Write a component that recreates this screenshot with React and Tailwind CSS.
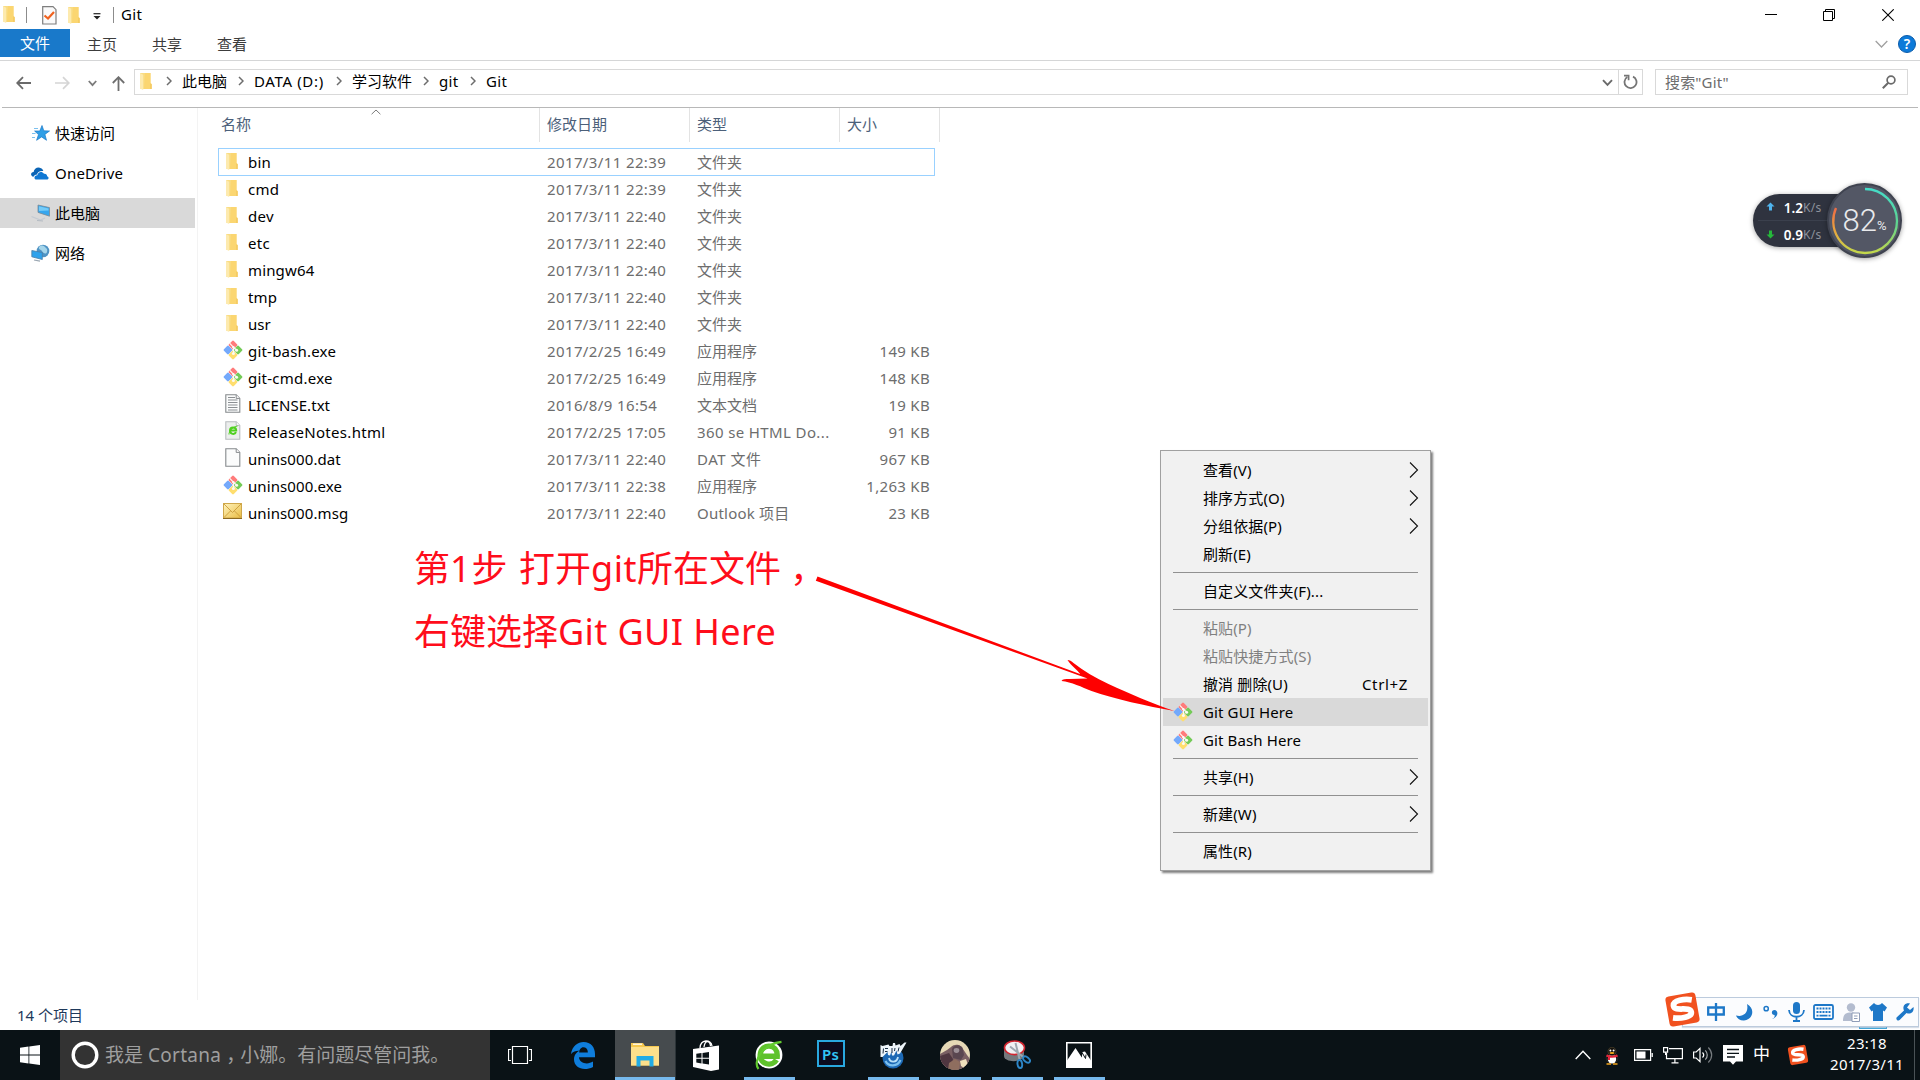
import React from "react";

const FILES = [
  ["folder", "bin", "2017/3/11 22:39", "文件夹", "", "tracking-[0.2px]"],
  ["folder", "cmd", "2017/3/11 22:39", "文件夹", "", "tracking-[0.2px]"],
  ["folder", "dev", "2017/3/11 22:40", "文件夹", "", "tracking-[0.3px]"],
  ["folder", "etc", "2017/3/11 22:40", "文件夹", "", "tracking-[0.3px]"],
  ["folder", "mingw64", "2017/3/11 22:40", "文件夹", "", "tracking-[0.15px]"],
  ["folder", "tmp", "2017/3/11 22:40", "文件夹", "", "tracking-[0.2px]"],
  ["folder", "usr", "2017/3/11 22:40", "文件夹", "", "tracking-[0px]"],
  ["git", "git-bash.exe", "2017/2/25 16:49", "应用程序", "149 KB", "tracking-[0.2px]"],
  ["git", "git-cmd.exe", "2017/2/25 16:49", "应用程序", "148 KB", "tracking-[0.25px]"],
  ["txt", "LICENSE.txt", "2016/8/9 16:54", "文本文档", "19 KB", "tracking-[0.05px]"],
  ["html", "ReleaseNotes.html", "2017/2/25 17:05", "360 se HTML Do...", "91 KB", "tracking-[0.3px]"],
  ["dat", "unins000.dat", "2017/3/11 22:40", "DAT 文件", "967 KB", "tracking-[0.1px]"],
  ["git", "unins000.exe", "2017/3/11 22:38", "应用程序", "1,263 KB", "tracking-[0.1px]"],
  ["msg", "unins000.msg", "2017/3/11 22:40", "Outlook 项目", "23 KB", "tracking-[0.1px]"],
];

const KIND_TRACKING = {
  "360 se HTML Do...": "tracking-[0.38px]",
  "DAT 文件": "tracking-[0.5px]",
  "Outlook 项目": "tracking-[0.22px]",
};

const MENU = [
  { label: "查看(V)", sub: true },
  { label: "排序方式(O)", sub: true },
  { label: "分组依据(P)", sub: true },
  { label: "刷新(E)" },
  null,
  { label: "自定义文件夹(F)..." },
  null,
  { label: "粘贴(P)", off: true },
  { label: "粘贴快捷方式(S)", off: true },
  { label: "撤消 删除(U)", key: "Ctrl+Z" },
  { label: "Git GUI Here", git: true, hot: true },
  { label: "Git Bash Here", git: true },
  null,
  { label: "共享(H)", sub: true },
  null,
  { label: "新建(W)", sub: true },
  null,
  { label: "属性(R)" },
];

function Folder() {
  return (
    <svg className="block shrink-0" width="12" height="17" viewBox="0 0 12 17">
      <path d="M0 0h10.5v10l1 1v5H2L0 15.5z" fill="#f9dc83" />
      <path d="M5 0h5.5v10l1 1v5H4z" fill="#fbd671" />
      <path d="M0 0l3.2 1.8V17L0 15.5z" fill="#fdeaae" />
      <path d="M10.5 10.5l1 .8V16h-1z" fill="#efc257" />
    </svg>
  );
}

function GitIcon() {
  return (
    <svg className="block shrink-0" width="20" height="20" viewBox="0 0 20 20">
      <g transform="rotate(45 10 10)">
        <rect x="3" y="3" width="6.9" height="6.9" rx="1.2" fill="#ff7b7b" />
        <rect x="10.1" y="3" width="6.9" height="6.9" rx="1.2" fill="#74cb58" />
        <rect x="3" y="10.1" width="6.9" height="6.9" rx="1.2" fill="#74a9fb" />
        <rect x="10.1" y="10.1" width="6.9" height="6.9" rx="1.2" fill="#ffde6e" />
      </g>
      <path d="M6.8 3.4l3.8 4v6M10.6 7.4l3 2.600" stroke="#fbfaf4" strokeWidth="1.2" fill="none" />
      <circle cx="10.4" cy="7.200" r="1.2" fill="#fbfaf4" />
      <circle cx="13.6" cy="10.200" r="1.5" fill="#fbfaf4" />
      <circle cx="10.4" cy="13.400" r="1.5" fill="#fbfaf4" />
    </svg>
  );
}

function Page({ kind }) {
  return (
    <svg className="block shrink-0" width="16" height="19" viewBox="0 0 16 19">
      <path d="M.8.8h10.4l3.6 3.6v13.8H.8z" fill={kind === "html" ? "#eceeed" : "#fbfcfc"} stroke={kind === "html" ? "#b9bdc0" : "#85898c"} strokeWidth="1.1" />
      <path d="M11.2.8v3.6h3.6" fill="#fff" stroke={kind === "html" ? "#b9bdc0" : "#85898c"} strokeWidth="1" />
      {kind === "txt" && <path d="M3 3.5h7M3 6h9.5M3 8.5h9.5M3 11h9.5M3 13.5h9.5M3 16h9.5" stroke="#8b8f93" strokeWidth="1" />}
      {kind === "html" && (
        <g fill="none" stroke="#4fd01f">
          <path d="M5 9.6h6.2C11.200 5.400 5 5.400 5 9.600c0 4 4.800 4.200 6 1.600" strokeWidth="2" />
          <path d="M4 13.500C3.500 11 8 5.500 12.500 5" strokeWidth="1" />
        </g>
      )}
    </svg>
  );
}

function Mail() {
  return (
    <svg className="block shrink-0" width="19" height="16" viewBox="0 0 19 16">
      <defs>
        <linearGradient id="mailFill" x1="0" y1="0" x2="1" y2="1">
          <stop offset="0" stopColor="#fff3bd" />
          <stop offset="1" stopColor="#e9bd44" />
        </linearGradient>
      </defs>
      <rect x=".5" y=".5" width="18" height="14.500" fill="url(#mailFill)" stroke="#cfa74a" />
      <path d="M1 14.500l6.500-6.500M18 14.500L11.500 8M1 1l8.500 8.500L18 1" stroke="#c99b3a" fill="none" strokeWidth=".9" />
      <path d="M0 15.500h19" stroke="#8d6b22" strokeWidth="1" />
    </svg>
  );
}

function FileIcon({ type }) {
  if (type === "folder") return <span className="ml-[7px] -mt-[1px]"><Folder /></span>;
  if (type === "git") return <span className="ml-[4px] -mt-[2px]"><GitIcon /></span>;
  if (type === "msg") return <span className="ml-[4px] -mt-[3px]"><Mail /></span>;
  return <span className="ml-[6px] -mt-[3px]"><Page kind={type} /></span>;
}

function Crumb({ children, className }) {
  return (
    <span className={"-mt-[2px] flex items-center " + className}>
      <svg width="6" height="10" viewBox="0 0 6 10" className="mr-[10px] shrink-0"><path d="M1 1l4 4-4 4" stroke="#6d6d6d" strokeWidth="1.500" fill="none" /></svg>
      <span className="whitespace-nowrap">{children}</span>
    </span>
  );
}

function Star() {
  return (
    <svg width="18" height="17" viewBox="0 0 18 17">
      <path d="M10 0.500l1.800 5.300 5.700.2-4.600 3.400 1.600 5.900-4.900-3.400-5 3.400 1.900-5.700L2.600 6h5.200z" fill="#2f9ee6" stroke="#1b79c8" strokeWidth=".7" />
      <path d="M2 3.500h4M0 8.500h3.500M0 12.500h3" stroke="#7cc0ee" strokeWidth="1.100" />
    </svg>
  );
}

function Cloud() {
  return (
    <svg width="18" height="13" viewBox="0 0 18 13">
      <path d="M2.500 9.800C-1 9-.5 5 2.600 4.900 3 1.500 7-.8 10 1.300c1.500.8 2 1.700 2.300 2.700C8.500 3.500 6.300 5.500 6 7.500 4 7.600 3 8.500 2.500 9.800z" fill="#0a64b5" />
      <path d="M5.500 12.500c-3-.3-2.600-4 .8-4.200C6.800 5 10.800 3.600 13 6.800c2.200-.3 3.200 1.200 3 2.400 2.200.5 2.100 3.200-.2 3.300z" fill="#0f78d4" />
    </svg>
  );
}

function Pc() {
  return (
    <svg width="20" height="18" viewBox="0 0 20 18">
      <path d="M7 1l11.500 2.600v8.600L7 8.400z" fill="#36a6ee" stroke="#7b8a96" strokeWidth=".8" />
      <path d="M8 2.200l9.500 2.300v2L8 7z" fill="#74cbf8" />
      <path d="M.5 12.500l9 3.500 4.500-2" stroke="#c3cad2" strokeWidth="1.300" fill="none" />
      <path d="M6 16.500l6 .5" stroke="#b4bbc3" />
    </svg>
  );
}

function Net() {
  return (
    <svg width="19" height="18" viewBox="0 0 19 18">
      <circle cx="12" cy="7" r="6.300" fill="#4f93c4" />
      <path d="M8 3c3-3 5-1 6 0s3 2 2 5-4 1-5-1-4-1-3-4z" fill="#a5d5ea" />
      <path d="M.8 6.500l10.500 2v7L.8 12.800z" fill="#2fa2ec" stroke="#4e7ea5" strokeWidth=".8" />
      <path d="M3 16l6 1.200" stroke="#9aa6b2" strokeWidth="1.200" />
    </svg>
  );
}

function SogouS({ size }) {
  return (
    <svg width={size} height={size} viewBox="0 0 36 36">
      <g transform="rotate(-10 18 18)">
        <rect x="3.200" y="3.200" width="29.600" height="29.600" rx="3.500" fill="#f1511f" />
        <path d="M28.500 10.300C22 8 10 7.400 10 13.200c0 6 16 2.600 16 8.600 0 5.200-11.500 4.800-18.500 2.600" stroke="#fff" strokeWidth="5.600" fill="none" />
      </g>
    </svg>
  );
}

function TaskButton({ children, className, running }) {
  return (
    <div className={"flex h-[50px] flex-col items-center justify-between " + className}>
      <span className="h-[3px]" />
      <span className="flex h-[44px] items-center justify-center">{children}</span>
      <span className={running ? "h-[3px] w-full bg-[#76b9ed]" : "h-[3px] w-full"} />
    </div>
  );
}

function Speed({ up, value }) {
  return (
    <div className="flex h-[26px] items-center">
      <svg width="9" height="10" viewBox="0 0 9 10" className={up ? "" : "rotate-180"}>
        <path d="M4.500.5L8.500 4.500H6V8.500H3V4.500H.5z" fill={up ? "#4fb4ee" : "#25b83a"} />
      </svg>
      <span className={(up ? "mt-[2px]" : "mt-[1px]") + " ml-[6px] w-[22px] text-right text-[13.500px] font-semibold tracking-[0px] text-white"}>{value}</span>
      <span className={(up ? "mt-[2px]" : "mt-[1px]") + " text-[12px] tracking-[0.3px] text-[#8d919b]"}>K/s</span>
    </div>
  );
}

export default function App() {
  return (
    <div className="relative flex h-[1080px] w-[1920px] flex-col overflow-hidden bg-white font-['Noto_Sans','Noto_Sans_CJK_SC',sans-serif] text-[15px] leading-[20px] text-black">
      {/* title bar */}
      <header className="flex h-[29px] shrink-0 items-center">
        <span className="ml-[3px]"><Folder /></span>
        <span className="ml-[11px] h-[16px] w-px bg-[#8c8c8c]" />
        <svg className="ml-[15px] mt-[1px]" width="15" height="19" viewBox="0 0 15 19">
          <path d="M.7.7h10.300l3 3v14.300H.7z" fill="#fafafa" stroke="#7e7e7e" strokeWidth="1.200" />
          <path d="M2.500 9.500l3.500 3 6-6.500" stroke="#f0621f" strokeWidth="2.200" fill="none" />
        </svg>
        <span className="ml-[11px] mt-[1px]"><Folder /></span>
        <svg className="ml-[13px] mt-[3px]" width="8" height="7" viewBox="0 0 8 7"><path d="M.5.7h7" stroke="#222" strokeWidth="1.200" /><path d="M.5 3h7L4 6.500z" fill="#222" /></svg>
        <span className="ml-[12px] h-[16px] w-px bg-[#8c8c8c]" />
        <span className="ml-[7px] -mt-[1px] tracking-[0.3px]">Git</span>
        <div className="ml-auto mr-[26px] flex items-center">
          <svg width="12" height="12" viewBox="0 0 12 12"><path d="M0 5.500h12" stroke="#000" /></svg>
          <svg className="ml-[46px]" width="12" height="12" viewBox="0 0 12 12"><path d="M.5 2.500h9v9h-9zM2.500 2.500v-2h9v9h-2" stroke="#000" fill="none" /></svg>
          <svg className="ml-[47px]" width="12" height="12" viewBox="0 0 12 12"><path d="M.3.3l11.400 11.400M11.700.3L.3 11.700" stroke="#000" strokeWidth="1.100" /></svg>
        </div>
      </header>

      {/* ribbon tabs */}
      <nav className="flex h-[32px] shrink-0 items-start border-b border-[#d5d6d7] text-[#3c3c3c]">
        <span className="flex h-[28px] w-[70px] items-center justify-center bg-[#1979ca] text-white">文件</span>
        <span className="ml-[17px] mt-[5px]">主页</span>
        <span className="ml-[35px] mt-[5px]">共享</span>
        <span className="ml-[35px] mt-[5px]">查看</span>
        <svg className="ml-auto mt-[11px]" width="13" height="8" viewBox="0 0 13 8"><path d="M.7 1l5.800 6L12.300 1" stroke="#a0a0a0" strokeWidth="1.300" fill="none" /></svg>
        <span className="ml-[10px] mr-[4px] mt-[6px] flex h-[18px] w-[18px] items-center justify-center rounded-full border border-[#0b5cab] bg-[#0d7ad9] text-[14px] font-semibold text-white">?</span>
      </nav>

      {/* address bar */}
      <div className="flex h-[46px] shrink-0 items-start">
        <svg className="ml-[16px] mt-[15px]" width="15" height="14" viewBox="0 0 15 14"><path d="M15 7H1.500M7 1.200L1.200 7 7 12.800" stroke="#6a6a6a" strokeWidth="1.800" fill="none" /></svg>
        <svg className="ml-[24px] mt-[15px]" width="15" height="14" viewBox="0 0 15 14"><path d="M0 7h13.500M8 1.200L13.800 7 8 12.800" stroke="#d5d5d5" strokeWidth="1.700" fill="none" /></svg>
        <svg className="ml-[18px] mt-[19px]" width="9" height="7" viewBox="0 0 9 7"><path d="M.8 1l3.700 4.200L8.200 1" stroke="#7b7b7b" strokeWidth="1.800" fill="none" /></svg>
        <svg className="ml-[15px] mt-[15px]" width="13" height="15" viewBox="0 0 13 15"><path d="M6.500 15V1.500M.8 7L6.500 1.200 12.200 7" stroke="#6f6f6f" strokeWidth="1.800" fill="none" /></svg>
        <div className="ml-[9px] mt-[8px] flex h-[26px] w-[1509px] items-center border border-[#d9d9d9]">
          <span className="ml-[5px] -mt-[2px]"><Folder /></span>
          <Crumb className="ml-[14px] w-[72px]">此电脑</Crumb>
          <Crumb className="w-[98px] tracking-[0.65px]">DATA (D:)</Crumb>
          <Crumb className="w-[87px]">学习软件</Crumb>
          <Crumb className="w-[47px] tracking-[0.3px]">git</Crumb>
          <Crumb className="tracking-[0.3px]">Git</Crumb>
          <svg className="ml-auto mt-[2px]" width="11" height="8" viewBox="0 0 11 8"><path d="M1 1.200l4.500 4.600L10 1.200" stroke="#6a6a6a" strokeWidth="1.900" fill="none" /></svg>
          <span className="ml-[5px] h-full w-px bg-[#d9d9d9]" />
          <svg className="mx-[4px]" width="15" height="16" viewBox="0 0 15 16"><path d="M4.300 3A6 6 0 1 0 10 2.600" stroke="#757575" strokeWidth="1.800" fill="none" /><path d="M1 1.600h4.600v4.600" stroke="#757575" strokeWidth="1.700" fill="none" /></svg>
        </div>
        <div className="ml-[12px] mt-[8px] flex h-[26px] w-[253px] items-center border border-[#d9d9d9]">
          <span className="ml-[9px] text-[#6d6d6d] tracking-[0.150px]">搜索"Git"</span>
          <svg className="ml-auto mr-[11px]" width="14" height="14" viewBox="0 0 14 14"><circle cx="9" cy="5" r="3.900" stroke="#6a6a6a" strokeWidth="1.700" fill="none" /><path d="M6.300 7.700L.8 13.200" stroke="#6a6a6a" strokeWidth="2" /></svg>
        </div>
      </div>
      <div className="mx-[2px] h-px shrink-0 bg-[#b8b8b8]" />

      {/* window body */}
      <div className="flex min-h-0 flex-1">
        <aside className="flex w-[198px] shrink-0 flex-col border-r border-[#f3f3f3] pt-[10px]">
          <div className="flex h-[30px] w-[195px] items-center"><span className="ml-[32px] w-[23px]"><Star /></span>快速访问</div>
          <div className="mt-[10px] flex h-[30px] w-[195px] items-center"><span className="ml-[31px] w-[24px]"><Cloud /></span><span className="tracking-[0.200px]">OneDrive</span></div>
          <div className="mt-[10px] flex h-[30px] w-[195px] items-center bg-[#d9d9d9]"><span className="ml-[31px] w-[24px]"><Pc /></span>此电脑</div>
          <div className="mt-[10px] flex h-[30px] w-[195px] items-center"><span className="ml-[31px] w-[24px]"><Net /></span>网络</div>
        </aside>
        <main className="flex flex-col">
          <div className="flex h-[34px] text-[#4c607a]">
            <div className="flex w-[342px] items-start border-r border-[#e3e3e3] pl-[23px] pt-[6px]">
              名称
              <svg className="-mt-[5px] ml-[120px]" width="10" height="6" viewBox="0 0 10 6"><path d="M.6 5.200L5 1l4.400 4.200" stroke="#7b7b7b" fill="none" /></svg>
            </div>
            <div className="w-[150px] border-r border-[#e3e3e3] pl-[7px] pt-[6px]">修改日期</div>
            <div className="w-[150px] border-r border-[#e3e3e3] pl-[7px] pt-[6px]">类型</div>
            <div className="w-[100px] border-r border-[#e3e3e3] pl-[7px] pt-[6px]">大小</div>
          </div>
          <div className="mt-[6px] flex flex-col pl-[20px]">
            {FILES.map(([type, name, date, kind, size, spacing], i) => (
              <div key={name} className={i === 0 ? "-mb-px flex h-[28px] w-[717px] items-center border border-[#99d1ff] text-[#6d6d6d]" : "flex h-[27px] w-[717px] items-center border-x border-transparent text-[#6d6d6d]"}>
                <span className="flex w-[29px] items-center"><FileIcon type={type} /></span>
                <span className={"w-[299px] text-black " + spacing}>{name}</span>
                <span className="w-[150px] tracking-[0.380px]">{date}</span>
                <span className={"w-[140px] whitespace-nowrap " + (KIND_TRACKING[kind] || "")}>{kind}</span>
                <span className="w-[93px] text-right tracking-[0.300px]">{size}</span>
              </div>
            ))}
          </div>
        </main>
      </div>

      {/* status bar */}
      <div className="flex h-[30px] shrink-0 items-center">
        <span className="ml-[17px] text-[#1e395b]">14 个项目</span>
      </div>

      {/* taskbar */}
      <footer className="flex h-[50px] shrink-0 bg-[#0a1216] text-white">
        <div className="flex w-[60px] items-center justify-center">
          <svg width="20" height="20" viewBox="0 0 20 20" fill="#fff"><path d="M0 2.800l8.500-1.200v8H0zM9.300 1.500L20 0v9.600H9.300zM0 10.400h8.500v8L0 17.200zM9.300 10.400H20V20L9.300 18.500z" /></svg>
        </div>
        <div className="flex w-[430px] items-center bg-[#333333]">
          <svg className="ml-[11px]" width="28" height="28" viewBox="0 0 28 28"><circle cx="14" cy="14" r="11.800" stroke="#fff" strokeWidth="3.400" fill="none" /></svg>
          <span className="ml-[6px] whitespace-nowrap text-[19px] text-[#9f9f9f]">我是 <span className="tracking-[0.3px]">Cortana</span><span className="relative left-[5px]">，</span>小娜。有问题尽管问我。</span>
        </div>
        <div className="flex w-[60px] items-center justify-center">
          <svg width="24" height="18" viewBox="0 0 24 18"><path d="M4.500.5h15v17h-15zM3 3.500H.5v11H3M21 3.500h2.500v11H21" stroke="#fff" strokeWidth="1.200" fill="none" /></svg>
        </div>
        <TaskButton className="w-[65px]">
          <svg className="mt-[1px]" width="26" height="27" viewBox="0 0 26 27"><path d="M1 12C2 4 8 0 13.500 0 21 0 25 5.500 25 12v3.300H9c.3 6 8.500 7.800 14 4.300v5.300C14 29.500 4 26 4 17.500c0-4.500 2.600-7.300 5.600-8.700C7 8.500 3 9.300 1 12zm8.200-1.500h8.600c.2-3.600-1.800-5.300-4.500-5.300-2.300 0-4 2.300-4.100 5.300z" fill="#0f7ddb" /></svg>
        </TaskButton>
        <TaskButton className="w-[61px] border-r border-[#2c3438] bg-[#464b4e]" running>
          <svg width="28" height="24" viewBox="0 0 28 24">
            <path d="M0 0h12l2 3h14v19.500H0z" fill="#f5c84f" />
            <path d="M0 4h28v18.500H0z" fill="#fde08b" />
            <path d="M2 1.200h9" stroke="#fff" strokeWidth="1.200" />
            <path d="M5.500 23.500V13h17v10.500h-4v-6h-9v6z" fill="#21ace6" />
          </svg>
        </TaskButton>
        <TaskButton className="ml-[5px] w-[51px]">
          <svg width="27" height="31" viewBox="0 0 27 31">
            <path d="M7 8c.5-9 11-9 12-2M11 7C12 0 17 0 17.500 6" stroke="#fff" strokeWidth="1.300" fill="none" />
            <path d="M0 9l26-3.500v24L18 31 0 27z" fill="#fff" />
            <path d="M3.300 13.800l5.200-.8v4.700H3.300zM9.500 12.900l6.500-1v5.800H9.500zM3.300 18.700h5.200v4.700l-5.200-.8zM9.500 18.700H16v5.800l-6.500-1z" fill="#0a1216" />
          </svg>
        </TaskButton>
        <TaskButton className="ml-[12px] w-[51px]" running>
          <svg className="mr-[3px]" width="30" height="32" viewBox="0 0 30 32">
            <circle cx="16" cy="16" r="13.400" fill="#fff" />
            <path d="M8 17.200h16.200C25 4.500 8.200 3.500 7.200 16c-.4 9.500 12 12.200 16.300 4.800" stroke="#5fc22c" strokeWidth="5.400" fill="none" />
            <path d="M5.500 30C-.5 23 9 5 28.500 2.800" stroke="#62cb30" strokeWidth="2.200" fill="none" />
          </svg>
        </TaskButton>
        <TaskButton className="ml-[11px] w-[51px]">
          <span className="-mt-[3px] mr-[2px] flex h-[27px] w-[28px] items-center justify-center border-2 border-[#29a8df] bg-[#0b0b1e] text-[15px] font-semibold tracking-[0.3px] text-[#31c5f4]">Ps</span>
        </TaskButton>
        <TaskButton className="ml-[11px] w-[51px]" running>
          <svg className="mr-[2px]" width="28" height="28" viewBox="0 0 28 28">
            <circle cx="14" cy="17" r="10.500" fill="#1c68b4" />
            <path d="M6.500 20c3 6 12 6 15-1" stroke="#7cc0ee" strokeWidth="2.200" fill="none" />
            <path d="M10 17c1 5 8 5 9-1" stroke="#b9e0f8" strokeWidth="1.800" fill="none" />
            <path d="M1.500 4l2 1 6-1.500 1 1.500h3l.5-3 2 0 .5 2.500 4-1.500 1 2 4-3.500h2l-6.500 11-2.500 1-1-4-2.500 5h-2l-.5-4-1.500 4-2-.5-.5-3-5 5-2 0z" fill="#eef5fa" />
            <path d="M4.500 7.500l-.5 5M6 7.500h3M6 10.500h2.500M13 7v5M16 7l-.5 3M20 6.500l-1 4" stroke="#1b2f45" strokeWidth="1" />
          </svg>
        </TaskButton>
        <TaskButton className="ml-[11px] w-[51px]" running>
          <svg className="mr-[1px]" width="30" height="30" viewBox="0 0 30 30">
            <defs><clipPath id="avatarClip"><circle cx="15" cy="15" r="15" /></clipPath></defs>
            <g clipPath="url(#avatarClip)">
              <rect width="30" height="30" fill="#e6d8b6" />
              <path d="M0 30V14l7-4 4-3c4-4 11-2 12 2l4 6 3 4v11z" fill="#7a5f63" />
              <path d="M12 9c2-5 10-5 11 1l1 5-3 5-8-2z" fill="#5a4650" />
              <ellipse cx="16.500" cy="10.500" rx="2.800" ry="2.400" fill="#9c8f96" />
              <path d="M0 16l9-3 4 6-2 11H0z" fill="#4f3640" />
              <path d="M9 23l6-4 5 3-1 8H8z" fill="#8f6e5f" />
              <path d="M20 21l6-2 2 6-4 3-3-2z" fill="#efe0bd" />
            </g>
          </svg>
        </TaskButton>
        <TaskButton className="ml-[11px] w-[51px]" running>
          <svg className="mr-[1px]" width="28" height="30" viewBox="0 0 28 30">
            <path d="M1 8v8c0 7 20 7 20-1V8z" fill="#75797d" />
            <ellipse cx="11.500" cy="7.800" rx="10" ry="6.800" fill="#f1f1f3" stroke="#d22630" strokeWidth="1.600" />
            <path d="M7 6.500l14 11M12.500 3l4 16" stroke="#9ea7af" strokeWidth="2" />
            <ellipse cx="16.800" cy="24" rx="2.300" ry="4" stroke="#2d86c8" strokeWidth="1.900" fill="none" transform="rotate(-8 17 24)" />
            <ellipse cx="23.500" cy="19.500" rx="4" ry="2.400" stroke="#2d86c8" strokeWidth="1.900" fill="none" transform="rotate(40 23.500 19.500)" />
          </svg>
        </TaskButton>
        <TaskButton className="ml-[11px] w-[51px]" running>
          <svg className="mr-[2px]" width="26" height="26" viewBox="0 0 26 26"><path d="M.8.8h24.400v24.400H.8z" fill="#0a1216" stroke="#fff" strokeWidth="1.600" /><path d="M1 18.500L9.500 6l6.300 9.500.7-5.500 2.500-.5 6 9v6.500H1z" fill="#fff" /><path d="M16 10.500l3.500 6 .5-4" stroke="#0a1216" fill="none" /></svg>
        </TaskButton>

        {/* system tray */}
        <div className="ml-auto flex items-center">
          <svg width="16" height="10" viewBox="0 0 16 10"><path d="M.7 9L8 1.200 15.300 9" stroke="#fff" strokeWidth="1.400" fill="none" /></svg>
          <svg className="ml-[14px] mt-[2px]" width="14" height="18" viewBox="0 0 14 18">
            <ellipse cx="7" cy="11" rx="5.800" ry="6" fill="#111" stroke="#444" strokeWidth=".4" />
            <ellipse cx="7" cy="12" rx="4.200" ry="4.600" fill="#fff" />
            <ellipse cx="7" cy="4.500" rx="4" ry="4.300" fill="#16130e" stroke="#6b5a37" strokeWidth=".5" />
            <circle cx="5.400" cy="3.400" r="1" fill="#fff" /><circle cx="8.600" cy="3.400" r="1" fill="#fff" />
            <ellipse cx="7" cy="5.900" rx="2.500" ry="1" fill="#f6ab1b" />
            <path d="M1.500 8.500c3 1.600 8 1.600 11 0M4 9v4" stroke="#e5243a" strokeWidth="2" fill="none" />
            <path d="M1.500 17h4.500M8 17h4.500" stroke="#f2a51c" strokeWidth="1.600" />
          </svg>
          <svg className="ml-[15px]" width="19" height="12" viewBox="0 0 19 12"><path d="M.6.6h16v10.800H.6z" stroke="#fff" fill="none" strokeWidth="1.200" /><path d="M2.500 2.500h9v7h-9z" fill="#fff" /><path d="M18.200 4v4" stroke="#fff" strokeWidth="1.300" /></svg>
          <svg className="ml-[10px]" width="20" height="17" viewBox="0 0 20 17"><path d="M6 1.600h13.400v10H3.500V6M8.500 15.900h7M11.900 12v4M.6.700h4v4.500h-4zM2.600 5v3" stroke="#fff" strokeWidth="1.200" fill="none" /></svg>
          <svg className="ml-[10px]" width="20" height="18" viewBox="0 0 20 18"><path d="M.6 6h2.600L7 2.300v13.400L3.200 12H.6z" stroke="#fff" strokeWidth="1.200" fill="none" /><path d="M9.500 6.500c1.500 1.500 1.500 3.500 0 5" stroke="#fff" strokeWidth="1.200" fill="none" /><path d="M12.300 4.300c2.600 2.600 2.600 6.800 0 9.400" stroke="#a5a9ab" strokeWidth="1.200" fill="none" /><path d="M15.300 1.500c4.500 4.500 4.500 10.500 0 15" stroke="#777c7f" strokeWidth="1.200" fill="none" /></svg>
          <svg className="ml-[10px]" width="20" height="20" viewBox="0 0 20 20"><path d="M0 0h20v16.500h-7L10 19.800 7 16.500H0z" fill="#fff" /><path d="M4 4.500h12M4 8.300h12M4 12h8" stroke="#0a1216" strokeWidth="1.300" /></svg>
          <span className="ml-[10px] -mt-[2px] text-[17px]">中</span>
          <span className="ml-[17px]"><SogouS size={22} /></span>
          <div className="-mt-[2px] ml-[20px] flex w-[76px] flex-col items-center leading-[21px] tracking-[0.300px]">
            <span>23:18</span>
            <span>2017/3/11</span>
          </div>
          <span className="ml-[9px] mr-[5px] h-[50px] w-px bg-[#4a5256]" />
        </div>
      </footer>

      {/* network speed widget */}
      <div className="absolute left-[1753px] top-[183px] flex h-[75px] items-center">
        <div className="flex h-[53px] w-[96px] flex-col rounded-l-full bg-[#2f333f] pl-[13px] shadow-[0_1px_5px_rgba(0,0,0,0.350)]">
          <Speed up value="1.2" />
          <span className="-ml-[8px] h-px bg-[#3b404d]" />
          <Speed value="0.9" />
        </div>
        <div className="relative -ml-[22px] flex h-[75px] w-[75px] items-center justify-center rounded-full border-2 border-[#3f4350] bg-[#535765] shadow-[0_1px_5px_rgba(0,0,0,0.400)]">
          <svg className="absolute -left-[1.500px] -top-[1.500px]" width="74" height="74" viewBox="0 0 74 74">
            <defs>
              <linearGradient id="ringRight" x1="0" y1="0" x2="0" y2="1"><stop offset="0" stopColor="#45dcc8" /><stop offset=".55" stopColor="#5fd48f" /><stop offset="1" stopColor="#c3d84b" /></linearGradient>
              <linearGradient id="ringLeft" x1="0" y1="0" x2="0" y2="1"><stop offset="0" stopColor="#ee6a45" /><stop offset=".5" stopColor="#e9a53e" /><stop offset="1" stopColor="#c3d84b" /></linearGradient>
            </defs>
            <path d="M37 5a32 32 0 0 1 0 64" stroke="url(#ringRight)" strokeWidth="2.300" fill="none" />
            <path d="M37 69A32 32 0 0 1 8 24" stroke="url(#ringLeft)" strokeWidth="2.300" fill="none" />
          </svg>
          <span className="font-[Roboto] text-[31px] font-light text-[#e9eaec]">82</span>
          <span className="mt-[11px] font-[Roboto] text-[13px] text-[#e9eaec]">%</span>
        </div>
      </div>

      {/* annotation */}
      <p className="absolute left-[414px] top-[537px] whitespace-nowrap text-[36px] leading-[63px] text-[#ff0d1b]">
        第<span className="tracking-[1px]">1</span>步<span className="tracking-[2px]"> </span>打开<span className="tracking-[0.5px]">git</span>所在文件<span className="relative left-[9px]">，</span><br />右键选择<span className="tracking-[0.4px]">Git GUI Here</span>
      </p>

      {/* context menu */}
      <div className="absolute left-[1160px] top-[450px] flex h-[421px] w-[271px] flex-col border border-[#a0a0a0] bg-[#f1f1f1] px-[2px] pt-[5px] shadow-[2px_2px_2px_rgba(0,0,0,0.500)]">
        {MENU.map((m, i) =>
          m ? (
            <div key={i} className={"flex h-[28px] shrink-0 items-center " + (m.hot ? "bg-[#d9d9d9] " : "") + (m.off ? "text-[#808080]" : "text-black")}>
              <span className="ml-[10px] w-[30px]">{m.git && <GitIcon />}</span>
              <span className="whitespace-nowrap tracking-[0.120px]">{m.label}</span>
              {m.key && <span className="ml-auto mr-[20px] tracking-[0.650px]">{m.key}</span>}
              {m.sub && <svg className="ml-auto mr-[9px]" width="10" height="16" viewBox="0 0 10 16"><path d="M1 .5L8.500 8 1 15.500" stroke="#111" strokeWidth="1.100" fill="none" /></svg>}
            </div>
          ) : (
            <div key={i} className="flex h-[9px] shrink-0 items-center px-[10px]"><span className="h-px w-full bg-[#919191]" /></div>
          )
        )}
      </div>

      {/* pointer arrow */}
      <svg className="absolute left-[809px] top-[570px]" width="370" height="150" viewBox="0 0 370 150">
        <path d="M8.500 6.500L275 105.500l-3-.5C268 99 262 96 258.500 90c2 .3 4 1 6 3 10 8 22 15 35 21 22 10 42 19 66 27-28-5-60-12-83-20-10-4-20-9-30-10 1-2 4-2 8-2l18-.5L6.800 10.800z" fill="#fe0000" />
      </svg>

      {/* input method bar */}
      <div className="absolute left-[1859px] top-[1024px] h-[5px] w-[28px] border border-[#3fa7da] bg-[#a9d9ef]" />
      <div className="absolute left-[1664px] top-[991px] flex h-[37px] w-[256px] items-center">
        <div className="absolute left-[18px] top-[6px] h-[30px] w-[237px] border border-[#bccbdd] bg-[#fbfcfe] shadow-[0_1px_1px_rgba(140,160,190,0.350)]" />
        <div className="relative flex items-center">
          <SogouS size={37} />
          <svg className="ml-[6px] mt-[5px]" width="18" height="18" viewBox="0 0 18 18"><path d="M1.200 4.500h15.600v7H1.200zM9 0v18" stroke="#1e78c8" strokeWidth="2.300" fill="none" /></svg>
          <svg className="ml-[11px] mt-[5px]" width="17" height="17" viewBox="0 0 17 17"><path d="M11 0c9 5 5.500 16-3 16.500-4 .2-7-2-8-5C7 13.500 13 9 11 0z" fill="#1e78c8" /></svg>
          <svg className="ml-[10px] mt-[4px]" width="16" height="14" viewBox="0 0 16 14"><circle cx="3.200" cy="3.700" r="2.100" stroke="#1e78c8" strokeWidth="1.500" fill="none" /><path d="M9 14c2.500-1 3-2.500 2.500-4C8 10 8 5 11.500 5s5 6.500-2.500 9z" fill="#1e78c8" /></svg>
          <svg className="ml-[9px] mt-[4px]" width="17" height="20" viewBox="0 0 17 20"><rect x="5" y="0" width="7" height="12" rx="3.500" fill="#1e78c8" /><path d="M1 8c.5 9 14.500 9 15 0M8.500 15v4M5 19h7" stroke="#1e78c8" strokeWidth="1.800" fill="none" /></svg>
          <svg className="ml-[8px] mt-[5px]" width="21" height="16" viewBox="0 0 21 16"><rect x="1" y="1" width="19" height="14" rx="1.500" stroke="#1e78c8" strokeWidth="1.800" fill="none" /><path d="M3.500 4.500h14M3.500 8h14" stroke="#1e78c8" strokeWidth="2" strokeDasharray="2 1" /><path d="M3.500 11.700h2M6.500 11.700h8M15.500 11.700h2" stroke="#1e78c8" strokeWidth="1.800" /></svg>
          <svg className="ml-[9px] mt-[5px]" width="17" height="19" viewBox="0 0 17 19"><circle cx="8" cy="4.500" r="4.200" fill="#b3bccf" /><path d="M0 18c0-6 2-8.500 8-8.500S15 12 15 18z" fill="#b3bccf" /><path d="M9 10h7.500v8.500H9z" fill="#fff" stroke="#8f9db8" /><path d="M11 13h3.500M11 15.500h3.500" stroke="#8f9db8" /></svg>
          <svg className="ml-[9px] mt-[5px]" width="18" height="18" viewBox="0 0 18 18"><path d="M5 0c2 2.500 6 2.500 8 0l5 4.500-2.500 4-1.500-1V18H4V7.500l-1.500 1L0 4.500z" fill="#1e78c8" /></svg>
          <svg className="ml-[9px] mt-[4px]" width="18" height="18" viewBox="0 0 18 18"><path d="M14 .5c-5-1.500-8 3-6 7L.8 14.300c-1.500 1.700 1 4.200 2.800 2.800L10.500 10c4 2 8-1.500 7-6L14 7l-3-2.500z" fill="#1e78c8" /></svg>
        </div>
      </div>
    </div>
  );
}
